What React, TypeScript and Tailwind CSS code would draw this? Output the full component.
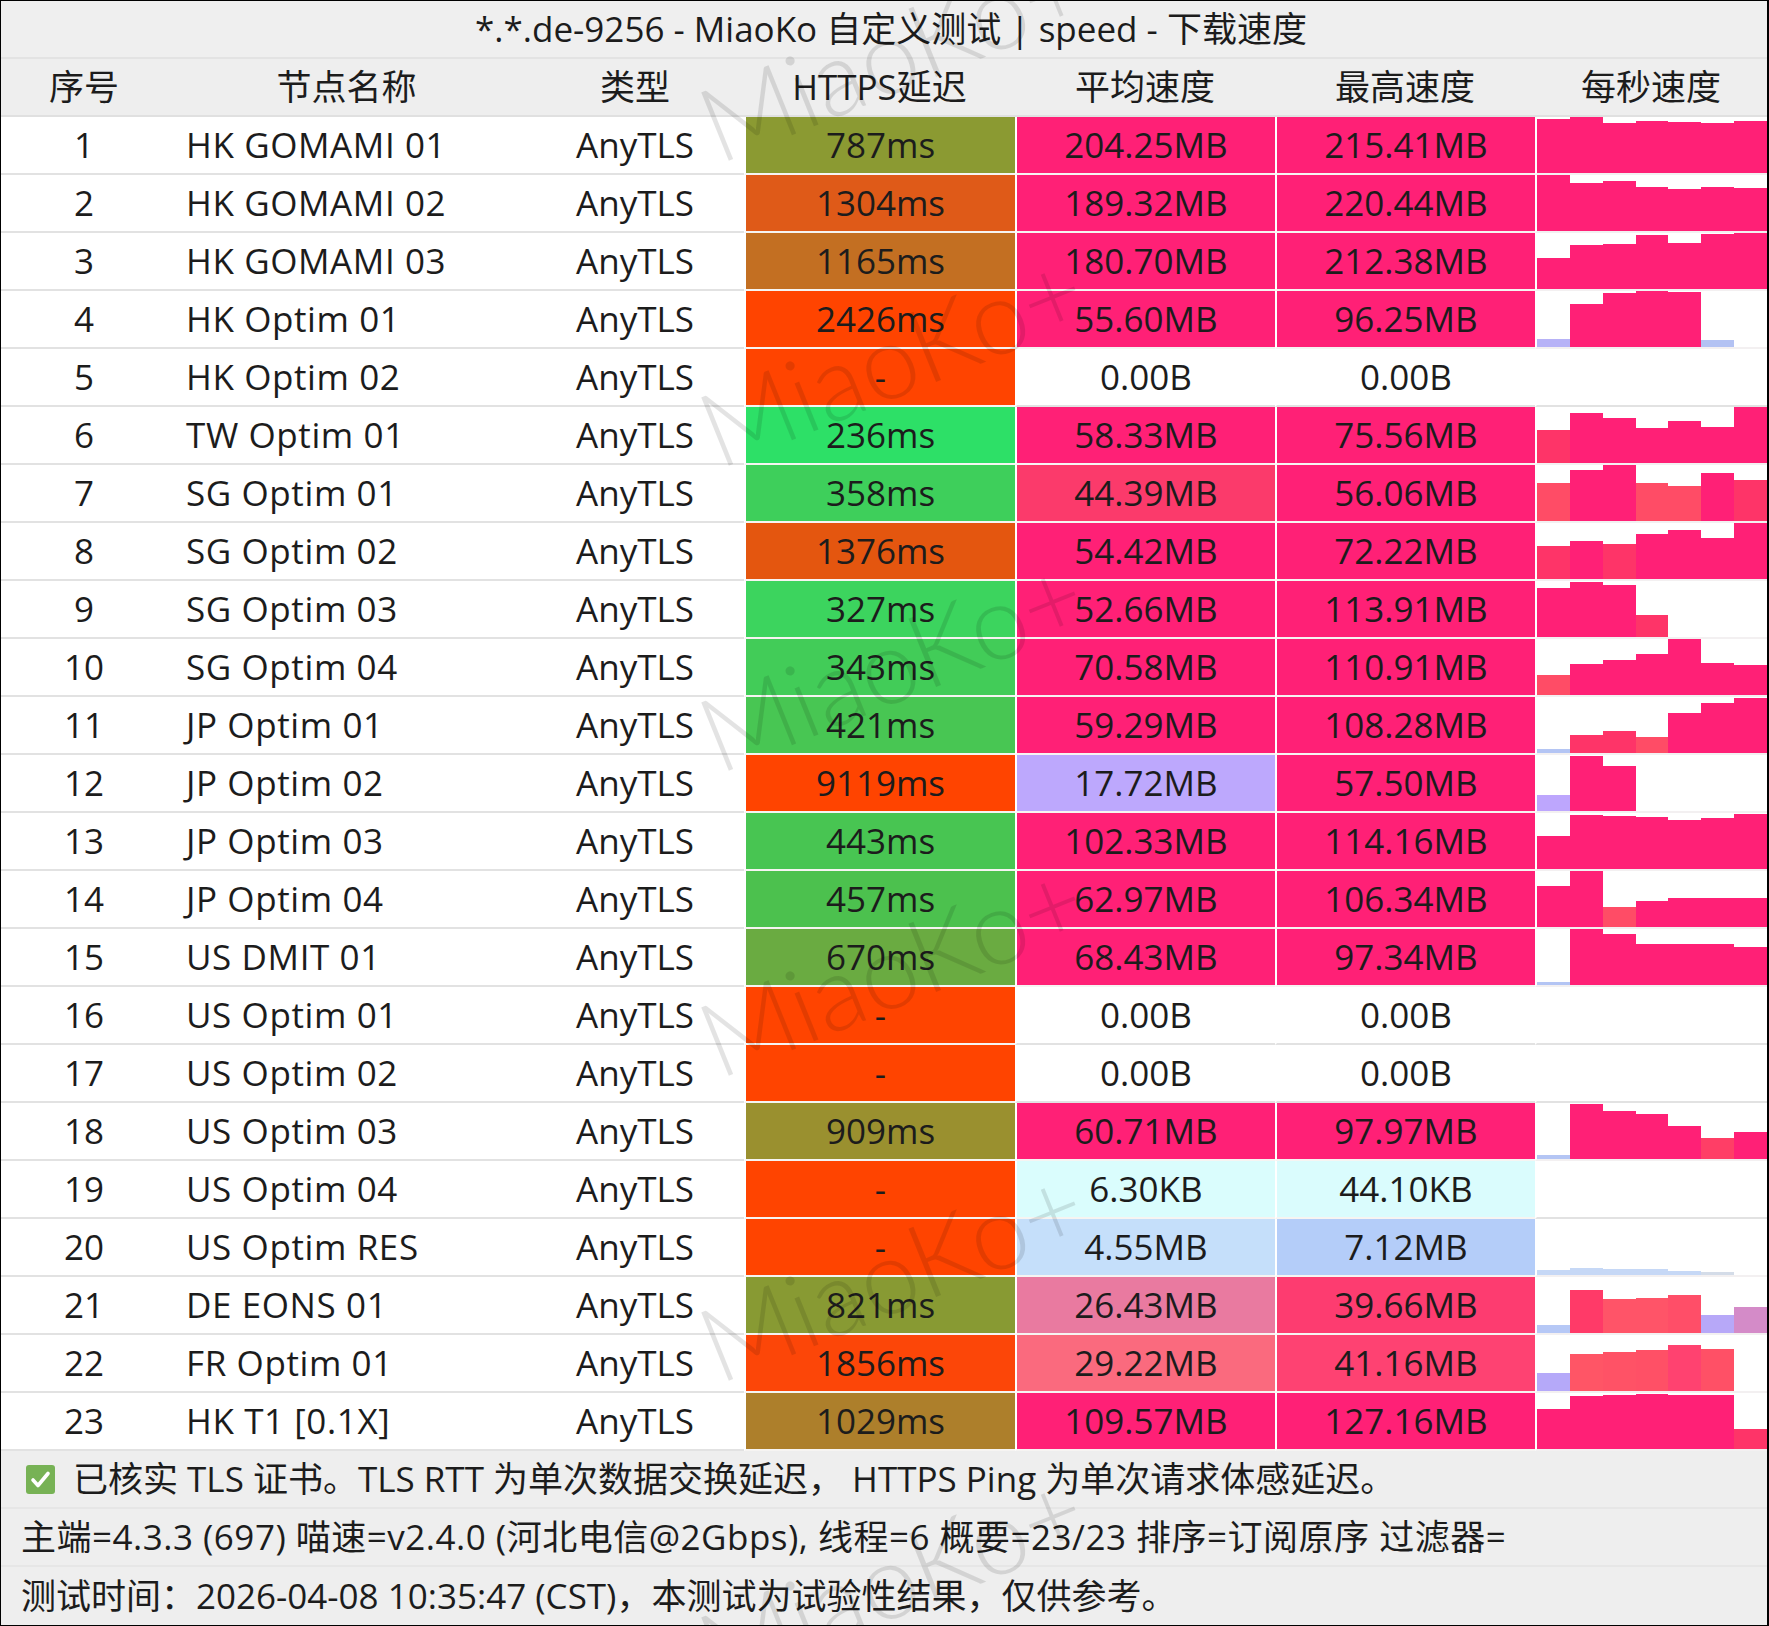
import React from "react";

type Bar = [number, string];
type Row = {
  id: number;
  name: string;
  lat: string;
  latC: string;
  avg: string;
  avgC: string;
  max: string;
  maxC: string;
  bars: Bar[];
};

const P = "bg-[#ff2076]";
const R = "bg-[#fe3468]";
const S = "bg-[#ff4c66]";
const B = "bg-[#b4c5f4]";
const W = "bg-white";

const rows: Row[] = [
  { id: 1, name: "HK GOMAMI 01", lat: "787ms", latC: "bg-[#8b9a32]", avg: "204.25MB", avgC: P, max: "215.41MB", maxC: P,
    bars: [[0.97, P], [1, P], [0.89, P], [0.93, P], [0.91, P], [0.9, P], [0.92, P]] },
  { id: 2, name: "HK GOMAMI 02", lat: "1304ms", latC: "bg-[#df5a18]", avg: "189.32MB", avgC: P, max: "220.44MB", maxC: P,
    bars: [[1, P], [0.86, P], [0.89, P], [0.78, P], [0.75, P], [0.78, P], [0.77, P]] },
  { id: 3, name: "HK GOMAMI 03", lat: "1165ms", latC: "bg-[#c36f22]", avg: "180.70MB", avgC: P, max: "212.38MB", maxC: P,
    bars: [[0.56, P], [0.78, P], [0.81, P], [0.96, P], [0.82, P], [0.98, P], [1, P]] },
  { id: 4, name: "HK Optim 01", lat: "2426ms", latC: "bg-[#ff4400]", avg: "55.60MB", avgC: P, max: "96.25MB", maxC: P,
    bars: [[0.15, "bg-[#b7b2f7]"], [0.76, P], [0.96, P], [1, P], [0.98, P], [0.12, "bg-[#b3c2f3]"], [0, W]] },
  { id: 5, name: "HK Optim 02", lat: "-", latC: "bg-[#ff4400]", avg: "0.00B", avgC: W, max: "0.00B", maxC: W, bars: [] },
  { id: 6, name: "TW Optim 01", lat: "236ms", latC: "bg-[#2de067]", avg: "58.33MB", avgC: P, max: "75.56MB", maxC: P,
    bars: [[0.59, R], [0.89, P], [0.8, P], [0.62, P], [0.75, P], [0.64, P], [1, P]] },
  { id: 7, name: "SG Optim 01", lat: "358ms", latC: "bg-[#3ecf5b]", avg: "44.39MB", avgC: "bg-[#fb3a6b]", max: "56.06MB", maxC: P,
    bars: [[0.68, S], [0.91, P], [1, P], [0.67, S], [0.62, S], [0.85, P], [0.73, R]] },
  { id: 8, name: "SG Optim 02", lat: "1376ms", latC: "bg-[#e4560f]", avg: "54.42MB", avgC: P, max: "72.22MB", maxC: P,
    bars: [[0.59, R], [0.68, P], [0.63, R], [0.8, P], [0.875, P], [0.73, P], [1, P]] },
  { id: 9, name: "SG Optim 03", lat: "327ms", latC: "bg-[#3cd45e]", avg: "52.66MB", avgC: P, max: "113.91MB", maxC: P,
    bars: [[0.88, P], [0.98, P], [0.92, P], [0.39, R], [0, W], [0, W], [0, W]] },
  { id: 10, name: "SG Optim 04", lat: "343ms", latC: "bg-[#42cc58]", avg: "70.58MB", avgC: P, max: "110.91MB", maxC: P,
    bars: [[0.35, S], [0.55, P], [0.62, P], [0.74, P], [1, P], [0.58, P], [0.53, P]] },
  { id: 11, name: "JP Optim 01", lat: "421ms", latC: "bg-[#48c653]", avg: "59.29MB", avgC: P, max: "108.28MB", maxC: P,
    bars: [[0.08, B], [0.33, R], [0.4, R], [0.28, S], [0.71, P], [0.9, P], [0.98, P]] },
  { id: 12, name: "JP Optim 02", lat: "9119ms", latC: "bg-[#ff4400]", avg: "17.72MB", avgC: "bg-[#bda8fd]", max: "57.50MB", maxC: P,
    bars: [[0.29, "bg-[#bda6fd]"], [0.98, P], [0.81, P], [0, W], [0, W], [0, W], [0, W]] },
  { id: 13, name: "JP Optim 03", lat: "443ms", latC: "bg-[#48c552]", avg: "102.33MB", avgC: P, max: "114.16MB", maxC: P,
    bars: [[0.59, P], [0.97, P], [0.94, P], [0.92, P], [0.88, P], [0.91, P], [0.98, P]] },
  { id: 14, name: "JP Optim 04", lat: "457ms", latC: "bg-[#4cc14e]", avg: "62.97MB", avgC: P, max: "106.34MB", maxC: P,
    bars: [[0.74, P], [1, P], [0.35, S], [0.47, P], [0.51, P], [0.51, P], [0.51, P]] },
  { id: 15, name: "US DMIT 01", lat: "670ms", latC: "bg-[#6aab41]", avg: "68.43MB", avgC: P, max: "97.34MB", maxC: P,
    bars: [[0.06, B], [1, P], [0.91, P], [0.73, P], [0.73, P], [0.73, P], [0.68, P]] },
  { id: 16, name: "US Optim 01", lat: "-", latC: "bg-[#ff4400]", avg: "0.00B", avgC: W, max: "0.00B", maxC: W, bars: [] },
  { id: 17, name: "US Optim 02", lat: "-", latC: "bg-[#ff4400]", avg: "0.00B", avgC: W, max: "0.00B", maxC: W, bars: [] },
  { id: 18, name: "US Optim 03", lat: "909ms", latC: "bg-[#9a902f]", avg: "60.71MB", avgC: P, max: "97.97MB", maxC: P,
    bars: [[0.08, B], [0.98, P], [0.86, P], [0.8, P], [0.59, P], [0.38, "bg-[#ff3e66]"], [0.48, P]] },
  { id: 19, name: "US Optim 04", lat: "-", latC: "bg-[#ff4400]", avg: "6.30KB", avgC: "bg-[#dafdfd]", max: "44.10KB", maxC: "bg-[#dafcfd]", bars: [] },
  { id: 20, name: "US Optim RES", lat: "-", latC: "bg-[#ff4400]", avg: "4.55MB", avgC: "bg-[#c5dffa]", max: "7.12MB", maxC: "bg-[#b4cdf9]",
    bars: [[0.09, "bg-[#c6d8f6]"], [0.12, "bg-[#c6d8f6]"], [0.1, "bg-[#c6d8f6]"], [0.1, "bg-[#c6d8f6]"], [0.08, "bg-[#c6d8f6]"], [0.06, "bg-[#d4dce8]"], [0, W]] },
  { id: 21, name: "DE EONS 01", lat: "821ms", latC: "bg-[#889a33]", avg: "26.43MB", avgC: "bg-[#e97aa0]", max: "39.66MB", maxC: "bg-[#fd3c70]",
    bars: [[0.14, "bg-[#b6c8f6]"], [0.77, "bg-[#ff3a68]"], [0.6, "bg-[#ff5468]"], [0.62, "bg-[#ff5468]"], [0.67, "bg-[#ff4e68]"], [0.33, "bg-[#b7a8f8]"], [0.46, "bg-[#d48bc8]"]] },
  { id: 22, name: "FR Optim 01", lat: "1856ms", latC: "bg-[#fc4608]", avg: "29.22MB", avgC: "bg-[#fa6a7e]", max: "41.16MB", maxC: "bg-[#fe4272]",
    bars: [[0.32, "bg-[#b5a9f9]"], [0.66, "bg-[#ff5566]"], [0.7, "bg-[#ff5266]"], [0.73, "bg-[#ff5066]"], [0.82, "bg-[#ff4270]"], [0.75, "bg-[#ff5066]"], [0, W]] },
  { id: 23, name: "HK T1 [0.1X]", lat: "1029ms", latC: "bg-[#ad7f2b]", avg: "109.57MB", avgC: P, max: "127.16MB", maxC: P,
    bars: [[0.71, P], [0.94, P], [0.97, P], [0.98, P], [0.97, P], [0.97, P], [0.35, R]] },
];

const GRID = "grid grid-cols-[166px_359px_218px_271px_260px_260px_232px]";
const FONT = "font-['Open_Sans','Noto_Sans_CJK_SC',sans-serif]";

function ColorCell({ bg, text }: { bg: string; text: string }) {
  const sep = bg === W ? "border-b-[#e2e2e2]" : "border-b-[#f6f4f2]";
  return (
    <div className={`flex items-center justify-center border-l-2 border-l-white border-b-2 ${sep} ${bg}`}>
      {text}
    </div>
  );
}

function Chart({ bars }: { bars: Bar[] }) {
  const sep = bars.length ? "border-b-[#f3f0f1]" : "border-b-[#e2e2e2]";
  return (
    <div className={`flex items-end border-l-2 border-l-white border-b-2 ${sep} bg-white`}>
      {bars.map(([h, c], i) => (
        <div key={i} className={`flex-1 ${c}`} style={{ height: `${Math.round(h * 56)}px` }} />
      ))}
    </div>
  );
}

function CheckIcon() {
  return (
    <svg width="29" height="29" viewBox="0 0 29 29" className="shrink-0">
      <rect x="0" y="0" width="29" height="29" rx="3" fill="#77b255" />
      <path d="M7 15 L12 20.5 L22 8.5" fill="none" stroke="white" strokeWidth="3.6" strokeLinecap="round" strokeLinejoin="round" />
    </svg>
  );
}

const marks = [51, 356, 661, 966, 1271, 1576];

export default function App() {
  return (
    <div className={`relative w-[1769px] h-[1626px] overflow-hidden border-t border-l border-b border-r-2 border-black bg-white text-[35px] text-[#1c1c1c] ${FONT}`}>
      <div className="flex h-[58px] items-center justify-center border-b-2 border-[#e3e3e3] bg-[#efefef] pl-[14px]">
        *.*.de-9256 - MiaoKo 自定义测试 | speed - 下载速度
      </div>
      <div className={`${GRID} h-[58px] border-b-2 border-[#e0e0e0] bg-[#eeeeee]`}>
        <div className="flex items-center justify-center">序号</div>
        <div className="flex items-center justify-center">节点名称</div>
        <div className="flex items-center justify-center">类型</div>
        <div className="flex items-center justify-center">HTTPS延迟</div>
        <div className="flex items-center justify-center">平均速度</div>
        <div className="flex items-center justify-center">最高速度</div>
        <div className="flex items-center justify-center">每秒速度</div>
      </div>
      {rows.map((r) => (
        <div key={r.id} className={`${GRID} h-[58px]`}>
          <div className="flex items-center justify-center border-b-2 border-b-[#e2e2e2]">{r.id}</div>
          <div className="flex items-center border-b-2 border-b-[#e2e2e2] pl-[19px] tracking-[0.6px]">{r.name}</div>
          <div className="flex items-center justify-center border-b-2 border-b-[#e2e2e2]">AnyTLS</div>
          <ColorCell bg={r.latC} text={r.lat} />
          <ColorCell bg={r.avgC} text={r.avg} />
          <ColorCell bg={r.maxC} text={r.max} />
          <Chart bars={r.bars} />
        </div>
      ))}
      <div className="flex h-[58px] items-center gap-[18px] border-b-2 border-[#e6e6e6] bg-[#eeeeee] pl-[25px]">
        <CheckIcon />
        <span>已核实 TLS 证书。TLS RTT 为单次数据交换延迟， HTTPS Ping 为单次请求体感延迟。</span>
      </div>
      <div className="flex h-[58px] items-center border-b-2 border-[#e6e6e6] bg-[#eeeeee] pl-[20px] tracking-[0.5px]">
        主端=4.3.3 (697) 喵速=v2.4.0 (河北电信@2Gbps), 线程=6 概要=23/23 排序=订阅原序 过滤器=
      </div>
      <div className="flex h-[58px] items-center bg-[#eeeeee] pl-[20px]">
        测试时间：2026-04-08 10:35:47 (CST)，本测试为试验性结果，仅供参考。
      </div>
      <div className="pointer-events-none absolute inset-0">
        {marks.map((y) => (
          <div
            key={y}
            className="absolute left-[890px] whitespace-nowrap font-['Lato',sans-serif] text-[104px] font-light leading-none text-black/[0.11] [transform:translate(-50%,-50%)_rotate(-22deg)]"
            style={{ top: `${y}px` }}
          >
            MiaoKo+
          </div>
        ))}
      </div>
    </div>
  );
}
